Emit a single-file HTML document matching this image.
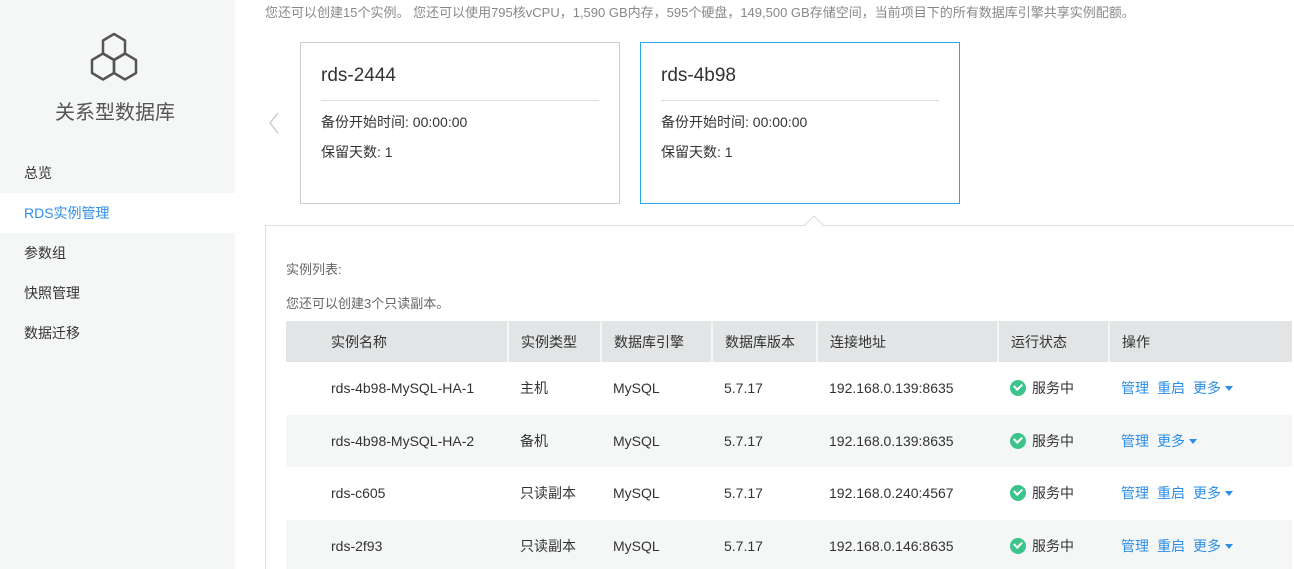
<!DOCTYPE html>
<html><head><meta charset="utf-8"><style>
*{margin:0;padding:0;box-sizing:border-box}
html,body{width:1294px;height:569px;overflow:hidden}
body{background:#fff;font-family:"Liberation Sans","Noto Sans CJK SC",sans-serif;color:#333;position:relative;font-size:14px}
.side{position:absolute;left:0;top:0;width:235px;height:569px;background:#f5f6f6}
.side .t{position:absolute;top:96px;left:0;width:230px;text-align:center;font-size:20px;color:#555}
.nav{position:absolute;left:0;width:235px;height:40px;line-height:40px;padding-left:24px;font-size:14px;color:#333}
.abs{position:absolute}
.card{position:absolute;top:42px;width:320px;height:162px;border:1px solid #ccc;background:#fff}
.card h3{position:absolute;left:20px;top:22px;font-weight:normal;font-size:19px;color:#333}
.card .ln{position:absolute;left:20px;right:20px;top:57px;border-top:1px solid #ddd}
.card p{position:absolute;left:20px;font-size:14px;color:#333}
.panel{position:absolute;left:265px;top:225px;width:1029px;height:344px;border:1px solid #ddd;border-right:none;border-bottom:none;background:#fff}
table{position:absolute;left:286px;top:321px;border-collapse:collapse;width:1006px}
th{background:#e2e4e5;height:41px;text-align:left;font-weight:normal;font-size:14px;color:#333;padding-left:12px;border-left:2px solid #f4f5f5}
th:first-child{border-left:none;padding-left:45px}
td{height:52.5px;padding-left:12px;font-size:14px;color:#333}
td:first-child{padding-left:45px}
tr.g td{background:#f5f7f7}
.ok{display:inline-block;width:16px;height:16px;border-radius:50%;background:#3cc48a;vertical-align:-3px;margin-right:6px;position:relative}
.ok:after{content:"";position:absolute;left:4px;top:3px;width:6px;height:4px;border-left:2px solid #fff;border-bottom:2px solid #fff;transform:rotate(-45deg)}
.a{color:#2b8ee8;margin-right:8px}
.caret{display:inline-block;border-left:4px solid transparent;border-right:4px solid transparent;border-top:5px solid #2b8ee8;vertical-align:2px;margin-left:4px}
</style></head><body>
<div class="side">
<svg class="abs" style="left:89px;top:32px" width="50" height="50" viewBox="0 0 50 50"><g fill="none" stroke="#555" stroke-width="2.5" stroke-linejoin="round"><path d="M25 2 L36 8.5 L36 21.5 L25 28 L14 21.5 L14 8.5 Z"/><path d="M14 21.5 L25 28 L25 41 L14 47.5 L3 41 L3 28 Z"/><path d="M36 21.5 L47 28 L47 41 L36 47.5 L25 41 L25 28 Z"/></g></svg>
<div class="t">关系型数据库</div>
<div class="nav" style="top:153px">总览</div>
<div class="nav" style="top:193px;background:#fff;color:#2b8ee8">RDS实例管理</div>
<div class="nav" style="top:233px">参数组</div>
<div class="nav" style="top:273px">快照管理</div>
<div class="nav" style="top:313px">数据迁移</div>
</div>
<div class="abs" style="left:265px;top:2px;font-size:13px;color:#888">您还可以创建15个实例。 您还可以使用795核vCPU，1,590 GB内存，595个硬盘，149,500 GB存储空间，当前项目下的所有数据库引擎共享实例配额。</div>
<svg class="abs" style="left:268px;top:112px" width="12" height="22"><path d="M10 1 L2 11 L10 21" fill="none" stroke="#ccc" stroke-width="1.5"/></svg>
<div class="card" style="left:300px"><h3>rds-2444</h3><div class="ln"></div><p style="top:69px">备份开始时间: 00:00:00</p><p style="top:99px">保留天数: 1</p></div>
<div class="card" style="left:640px;border-color:#27a9e1"><h3>rds-4b98</h3><div class="ln"></div><p style="top:69px">备份开始时间: 00:00:00</p><p style="top:99px">保留天数: 1</p></div>
<div class="panel"></div>
<svg class="abs" style="left:804px;top:215px" width="20" height="12"><path d="M0 11 L10 1 L20 11" fill="#fff" stroke="#ddd" stroke-width="1"/></svg>
<div class="abs" style="left:286px;top:259px;font-size:13px;color:#666">实例列表:</div>
<div class="abs" style="left:286px;top:293px;font-size:13px;color:#666">您还可以创建3个只读副本。</div>
<table>
<tr><th style="width:222px">实例名称</th><th style="width:93px">实例类型</th><th style="width:111px">数据库引擎</th><th style="width:105px">数据库版本</th><th style="width:181px">连接地址</th><th style="width:111px">运行状态</th><th>操作</th></tr>
<tr><td>rds-4b98-MySQL-HA-1</td><td>主机</td><td>MySQL</td><td>5.7.17</td><td>192.168.0.139:8635</td><td><span class="ok"></span>服务中</td><td><span class="a">管理</span><span class="a">重启</span><span class="a" style="margin:0">更多</span><span class="caret"></span></td></tr>
<tr class="g"><td>rds-4b98-MySQL-HA-2</td><td>备机</td><td>MySQL</td><td>5.7.17</td><td>192.168.0.139:8635</td><td><span class="ok"></span>服务中</td><td><span class="a">管理</span><span class="a" style="margin:0">更多</span><span class="caret"></span></td></tr>
<tr><td>rds-c605</td><td>只读副本</td><td>MySQL</td><td>5.7.17</td><td>192.168.0.240:4567</td><td><span class="ok"></span>服务中</td><td><span class="a">管理</span><span class="a">重启</span><span class="a" style="margin:0">更多</span><span class="caret"></span></td></tr>
<tr class="g"><td>rds-2f93</td><td>只读副本</td><td>MySQL</td><td>5.7.17</td><td>192.168.0.146:8635</td><td><span class="ok"></span>服务中</td><td><span class="a">管理</span><span class="a">重启</span><span class="a" style="margin:0">更多</span><span class="caret"></span></td></tr>
</table>
</body></html>
